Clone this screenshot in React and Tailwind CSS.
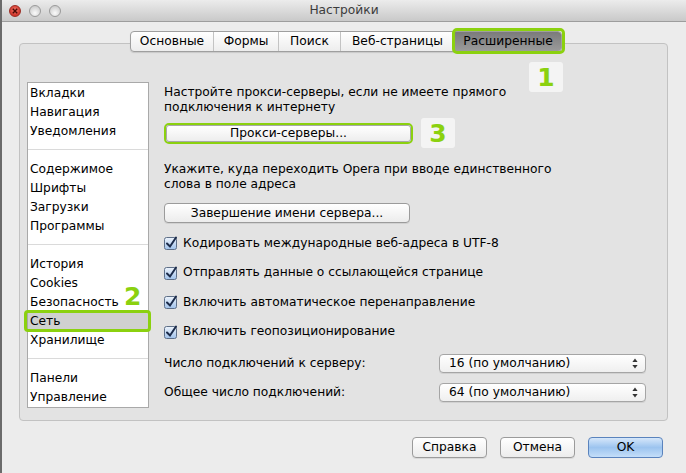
import React from 'react';

const GREEN = 'border-[#8bd10f]';

const Light = ({ red }) => (
  <div
    className={
      red
        ? 'w-[12px] h-[12px] rounded-full border border-[#9c2b22] bg-[radial-gradient(circle_at_50%_40%,#f2796b,#d0352a_70%)] flex items-center justify-center'
        : 'w-[12px] h-[12px] rounded-full border border-[#9a9a9a] bg-[radial-gradient(circle_at_50%_70%,#fbfbfb,#cfcfcf_75%)]'
    }
  >
    {red && (
      <svg width="6" height="6" viewBox="0 0 6 6">
        <path d="M0.8 0.8 L5.2 5.2 M5.2 0.8 L0.8 5.2" stroke="#4a0a05" strokeWidth="1.4" />
      </svg>
    )}
  </div>
);

const CheckBox = () => (
  <svg width="14" height="14" viewBox="0 0 14 14" className="shrink-0">
    <defs>
      <linearGradient id="cb" x1="0" y1="0" x2="0" y2="1">
        <stop offset="0" stopColor="#eef4fc" />
        <stop offset="1" stopColor="#9fc1ea" />
      </linearGradient>
    </defs>
    <rect x="0.5" y="1.5" width="12" height="12" rx="2" fill="url(#cb)" stroke="#5e6f88" />
    <path d="M3 7.5 L6 10.5 L12 1.5" fill="none" stroke="#1b2b4a" strokeWidth="2" strokeLinecap="round" />
  </svg>
);

const Arrows = () => (
  <svg width="6" height="11" viewBox="0 0 6 11">
    <path d="M3 0.5 L5.6 4 H0.4 Z" fill="#333" />
    <path d="M3 10.5 L5.6 7 H0.4 Z" fill="#333" />
  </svg>
);

const Badge = ({ n }) => (
  <div className="w-[34px] h-[30px] rounded-[3px] bg-[#f4f4f4] flex items-center justify-center text-[25px] font-bold leading-none text-[#8bd10f]">
    {n}
  </div>
);

const groups = [
  ['Вкладки', 'Навигация', 'Уведомления'],
  ['Содержимое', 'Шрифты', 'Загрузки', 'Программы'],
  ['История', 'Cookies', 'Безопасность', 'Сеть', 'Хранилище'],
  ['Панели', 'Управление'],
];

const tabs = [
  ['Основные', 'w-[82px]'],
  ['Формы', 'w-[65px]'],
  ['Поиск', 'w-[62px]'],
  ['Веб-страницы', 'w-[114px]'],
];

const checks = [
  'Кодировать международные веб-адреса в UTF-8',
  'Отправлять данные о ссылающейся странице',
  'Включить автоматическое перенаправление',
  'Включить геопозиционирование',
];

const btn =
  'h-[20px] rounded-[4px] border border-[#9b9b9b] bg-gradient-to-b from-[#ffffff] to-[#ececec] shadow-[0_1px_0_rgba(0,0,0,0.08)] flex items-center justify-center';

export default function App() {
  return (
    <div className="w-[686px] h-[473px] overflow-hidden bg-[#ececec] border-l-2 border-[#6b6b6b] flex flex-col text-[12.25px] text-black font-['DejaVu_Sans',sans-serif]">
      {/* title bar */}
      <div className="h-[22px] shrink-0 flex items-center bg-gradient-to-b from-[#ececec] to-[#c9c9c9] border-b border-[#9d9d9d]">
        <div className="w-[80px] flex gap-[8px] pl-[7px]">
          <Light red />
          <Light />
          <Light />
        </div>
        <div className="flex-1 text-center text-[#3c3c3c] leading-none">Настройки</div>
        <div className="w-[80px]" />
      </div>

      <div className="pl-[17px] pr-[18px] pt-[9px] flex flex-col">
        {/* tabs */}
        <div className="relative z-10 flex justify-center pl-[5px] -mb-[9px]">
          <div className="flex h-[21px] rounded-[4px] border border-[#9f9f9f] bg-gradient-to-b from-[#ffffff] to-[#ededed] shadow-[0_1px_1px_rgba(0,0,0,0.12)]">
            {tabs.map(([t, w], i) => (
              <div
                key={t}
                className={`${w} flex items-center justify-center ${i > 0 ? 'border-l border-[#c3c3c3]' : ''}`}
              >
                {t}
              </div>
            ))}
            <div className="relative w-[107px] flex items-center justify-center rounded-r-[3px] bg-gradient-to-b from-[#7b7b7b] to-[#9b9b9b] border-l border-[#6e6e6e]">
              Расширенные
              <div className={`absolute -left-[3px] -right-[4px] -top-[4px] -bottom-[3px] border-[3px] ${GREEN} rounded-[5px]`} />
            </div>
          </div>
        </div>

        {/* panel */}
        <div className="relative h-[378px] rounded-[4px] border border-[#c2c2c2] bg-[#e3e3e3] flex items-start pl-[7px] pt-[38px]">
          <div className="absolute left-[509px] top-[18px]">
            <Badge n="1" />
          </div>

          {/* sidebar */}
          <div className="relative w-[122px] h-[326px] bg-white border border-[#a9a9a9] flex flex-col">
            {groups.map((g, gi) => (
              <div
                key={gi}
                className={`flex flex-col ${gi === 0 ? 'pt-[1px]' : 'pt-[10px] border-t border-[#dadada]'} pb-[8px]`}
              >
                {g.map((item) => (
                  <div
                    key={item}
                    className={`relative h-[19px] flex items-center pl-[2px] ${item === 'Сеть' ? 'bg-[#d0d0d0]' : ''}`}
                  >
                    {item}
                    {item === 'Сеть' && (
                      <div className={`absolute -left-[4px] -right-[3px] -top-[2px] -bottom-[1px] border-[3px] ${GREEN} rounded-[4px]`} />
                    )}
                  </div>
                ))}
              </div>
            ))}
            <div className="absolute left-[96px] top-[201px] text-[25px] font-bold leading-none text-[#8bd10f]">2</div>
          </div>

          {/* content */}
          <div className="ml-[15px] mt-[3px] flex flex-col leading-[15px]">
            <div>Настройте прокси-серверы, если не имеете прямого</div>
            <div>подключения к интернету</div>

            <div className="mt-[3px] flex items-center">
              <div className={`w-[249px] h-[21px] rounded-[5px] border-[2px] ${GREEN} flex`}>
                <div className="flex-1 rounded-[3px] border border-[#a8a8a8] bg-gradient-to-b from-[#ffffff] to-[#ededed] flex items-center justify-center">
                  Прокси-серверы...
                </div>
              </div>
              <div className="ml-[8px]">
                <Badge n="3" />
              </div>
            </div>

            <div className="mt-[14px]">Укажите, куда переходить Opera при вводе единственного</div>
            <div>слова в поле адреса</div>

            <div className={`${btn} w-[246px] mt-[11px]`}>Завершение имени сервера...</div>

            <div className="mt-[10px] flex flex-col gap-[9.5px]">
              {checks.map((c) => (
                <div key={c} className="h-[20px] flex items-center gap-[5px]">
                  <CheckBox />
                  <span>{c}</span>
                </div>
              ))}
            </div>

            <div className="mt-[12px] flex flex-col gap-[10px]">
              {[
                ['Число подключений к серверу:', '16 (по умолчанию)'],
                ['Общее число подключений:', '64 (по умолчанию)'],
              ].map(([l, v]) => (
                <div key={l} className="flex items-center h-[19px]">
                  <div className="w-[275px]">{l}</div>
                  <div className="w-[207px] h-[19px] rounded-[4px] border border-[#a5a5a5] bg-gradient-to-b from-[#ffffff] to-[#efefef] shadow-[0_1px_0_rgba(0,0,0,0.08)] flex items-center pl-[9px] pr-[7px]">
                    <span className="flex-1">{v}</span>
                    <Arrows />
                  </div>
                </div>
              ))}
            </div>
          </div>
        </div>
      </div>

      {/* bottom buttons */}
      <div className="mt-[16px] flex justify-end gap-[13px] pr-[23px]">
        <div className={`${btn} w-[75px] h-[21px]`}>Справка</div>
        <div className={`${btn} w-[75px] h-[21px]`}>Отмена</div>
        <div className="w-[75px] h-[21px] rounded-[4px] border border-[#5a83bd] bg-gradient-to-b from-[#d6e7fa] via-[#9cc4ef] to-[#c4def9] flex items-center justify-center">
          OK
        </div>
      </div>
    </div>
  );
}
